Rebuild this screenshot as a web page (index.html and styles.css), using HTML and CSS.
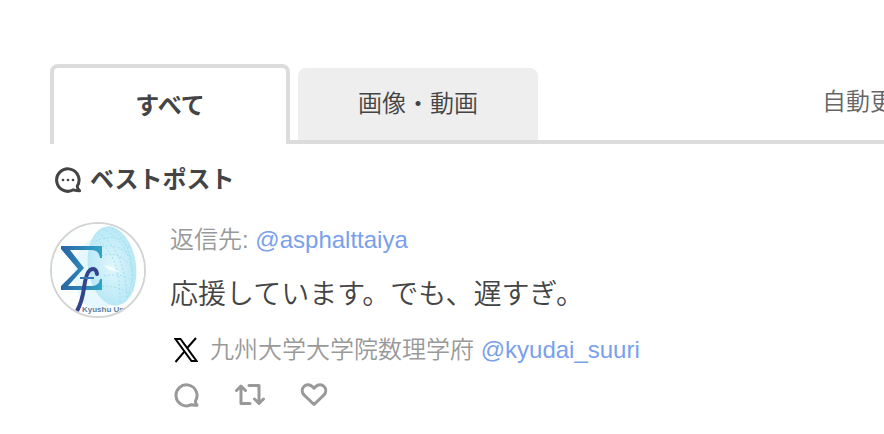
FILE: index.html
```html
<!DOCTYPE html>
<html lang="ja">
<head>
    <meta charset="UTF-8">
    <meta name="viewport" content="width=device-width, initial-scale=1.0">
    <title>ベストポスト</title>
    <link rel="stylesheet" href="styles.css">
</head>
<body>
    <div class="timeline">
        <nav class="tabs">
            <button type="button" class="tab tab-active">すべて</button>
            <button type="button" class="tab">画像・動画</button>
            <span class="auto-update">自動更新</span>
        </nav>

        <h2 class="best-post">
            <svg class="icon-best" viewBox="0 0 28 28" width="28" height="28" aria-hidden="true">
                <path d="M23.2 20.2A11.2 11.2 0 1 0 19.4 23.8Q22.3 24.8 25.6 24.8Q23.4 23.2 23.2 20.2Z" fill="none" stroke="#444" stroke-width="3" stroke-linejoin="round"/>
                <circle cx="9" cy="14" r="1.3" fill="#444"/>
                <circle cx="14" cy="14" r="1.3" fill="#444"/>
                <circle cx="19" cy="14" r="1.3" fill="#444"/>
            </svg>
            ベストポスト
        </h2>

        <article class="post">
            <a href="#" class="avatar" aria-label="九州大学大学院数理学府">
                <svg viewBox="0 0 92 92" width="92" height="92" aria-hidden="true">
                    <defs>
                        <linearGradient id="sigma" x1="0" y1="0" x2="1" y2="0">
                            <stop offset="0" stop-color="#2864a5"/>
                            <stop offset="1" stop-color="#32a5c8"/>
                        </linearGradient>
                        <radialGradient id="globe" cx="0.5" cy="0.5" r="0.55">
                            <stop offset="0" stop-color="#dff6fc"/>
                            <stop offset="1" stop-color="#b4e7f5"/>
                        </radialGradient>
                    </defs>
                    <rect width="92" height="92" fill="#fdffff"/>
                    <ellipse cx="46" cy="50" rx="24" ry="36" fill="#e6f8fd"/>
                    <ellipse cx="60" cy="42" rx="24" ry="40" fill="url(#globe)" transform="rotate(-8 60 42)"/>
                    <g fill="none" stroke="#a0dcee" stroke-width="1" stroke-dasharray="2 2">
                        <path d="M51 5Q84 22 81 67"/>
                        <path d="M60 5Q89 28 76 72"/>
                        <path d="M46 9Q74 27 75 76"/>
                        <path d="M44 16Q69 29 68 80"/>
                        <path d="M47 16Q67 8 78 25"/>
                        <path d="M46 24Q66 16 81 36"/>
                        <path d="M49 32Q67 25 82 46"/>
                        <path d="M52 52Q70 48 82 58"/>
                        <path d="M50 62Q66 62 79 70"/>
                    </g>
                    <path d="M52 41L60 43L67 48L57 46Z" fill="#f4fdff"/>
                    <path d="M9 22H50V34H48Q47 26 40 26H18L32 44L16 62H40Q47 62 48 55H50V66H9V62L26 45L9 25Z" fill="url(#sigma)"/>
                    <path d="M45 50Q44 43 38 46Q34 49 32 64Q30 78 25 87" fill="none" stroke="#33448c" stroke-width="4" stroke-linecap="round"/>
                    <path d="M28 54H42" stroke="#3676ae" stroke-width="2"/>
                    <text x="30" y="88" class="avatar-text">Kyushu Univ</text>
                </svg>
            </a>
            <div class="post-body">
                <p class="meta">返信先: <a href="#">@asphalttaiya</a></p>
                <p class="message">応援しています。でも、遅すぎ。</p>
                <p class="meta author">
                    <svg class="icon-x" viewBox="0 0 24 26" width="24" height="26" aria-label="X" role="img">
                        <path d="M1.5 2H6.5L22.5 24H17.5Z" fill="#fff" stroke="#000" stroke-width="2"/>
                        <path d="M22 1L13.2 11M10.4 14.6L1.5 25" fill="none" stroke="#000" stroke-width="2"/>
                    </svg>
                    <span>九州大学大学院数理学府 <a href="#">@kyudai_suuri</a></span>
                </p>
                <div class="actions">
                    <button type="button" aria-label="返信">
                        <svg viewBox="0 0 26 26" width="26" height="26" aria-hidden="true">
                            <path d="M21.4 19A10.5 10.5 0 1 0 17.4 22.7Q20.5 23.2 23 23.2Q21.5 21.5 21.4 19Z"/>
                        </svg>
                    </button>
                    <button type="button" aria-label="リポスト">
                        <svg viewBox="0 0 32 26" width="32" height="26" aria-hidden="true">
                            <path d="M2.5 8.5L7 4L11.5 8.5M7 5V21.5H16M15 3.5H25V20M20.5 17L25 21.5L29.5 17"/>
                        </svg>
                    </button>
                    <button type="button" aria-label="いいね">
                        <svg viewBox="0 0 28 26" width="28" height="26" aria-hidden="true">
                            <path d="M14 22.5L4.2 13.2C-1.5 7 6.5-.8 12.4 4.6L14 6.2L15.6 4.6C21.5-.8 29.5 7 23.8 13.2Z"/>
                        </svg>
                    </button>
                </div>
            </div>
        </article>
    </div>
</body>
</html>
```

FILE: styles.css
```css
body {
    margin: 0;
    background: #fff;
    color: #444;
    font-family: "Liberation Sans", "Noto Sans CJK JP", sans-serif;
    font-size: 24px;
    font-weight: 350;
    line-height: 32px;
    overflow-x: hidden;
}

a {
    color: #7a9fec;
    text-decoration: none;
}

button {
    padding: 0;
    border: none;
    background: none;
    color: inherit;
    font: inherit;
    cursor: pointer;
}

svg {
    display: block;
    flex-shrink: 0;
}

.timeline {
    padding: 64px 0 20px 50px;
}

.tabs {
    display: flex;
    align-items: flex-end;
    gap: 8px;
    border-bottom: 4px solid #dcdcdc;
}

.tab {
    flex: none;
    box-sizing: border-box;
    width: 240px;
    height: 72px;
    border-radius: 8px 8px 0 0;
    background: #eee;
}

.tab-active {
    height: 80px;
    margin-bottom: -4px;
    border: 4px solid #dcdcdc;
    border-bottom: none;
    background: #fff;
    font-weight: bold;
}

.auto-update {
    flex: none;
    width: 62px;
    margin-left: auto;
    padding-bottom: 22px;
    color: #666;
    white-space: nowrap;
}

.best-post {
    display: flex;
    align-items: center;
    gap: 8px;
    margin: 20px 0 26px;
    padding-left: 4px;
    font-size: 24px;
}

.post {
    display: flex;
    align-items: flex-start;
    gap: 24px;
}

.avatar {
    flex: none;
    border: 2px solid #d4d4d4;
    border-radius: 50%;
    overflow: hidden;
}

.avatar-text {
    fill: #5f80a2;
    font-size: 8px;
    font-weight: bold;
}

.post-body {
    flex: 1;
    min-width: 0;
    padding-top: 2px;
}

.meta {
    margin: 0;
    color: #999;
}

.message {
    margin: 16px 0;
    font-size: 28px;
    line-height: 46px;
}

.author {
    display: flex;
    align-items: center;
    gap: 12px;
    padding-left: 4px;
}

.icon-x {
    width: 24px;
}

.actions {
    display: flex;
    gap: 34px;
    margin-top: 16px;
    padding-left: 4px;
}

.actions path {
    fill: none;
    stroke: #999;
    stroke-width: 3;
    stroke-linecap: round;
    stroke-linejoin: round;
}
```
